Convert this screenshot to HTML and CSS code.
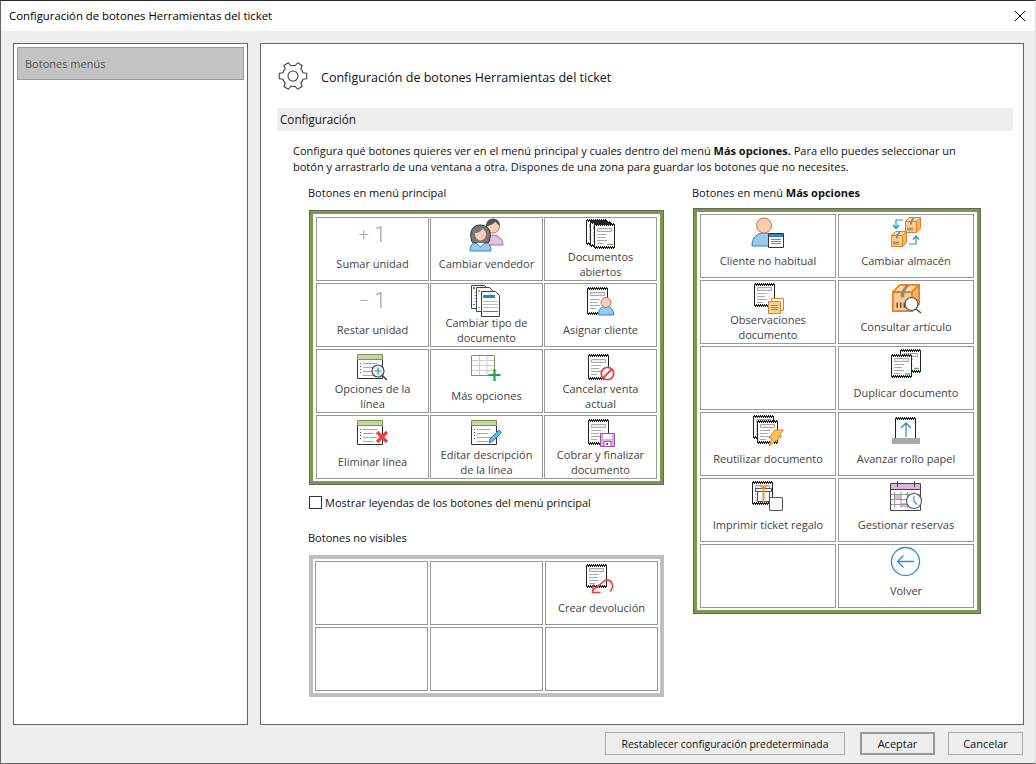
FILE: index.html
```html
<!DOCTYPE html>
<html lang="es">
<head>
<meta charset="utf-8">
<title>Configuración de botones Herramientas del ticket</title>
<link rel="stylesheet" href="styles.css">
</head>
<body>
<svg class="sprite" xmlns="http://www.w3.org/2000/svg">
  <symbol id="rc24" viewBox="0 0 21 24">
    <path shape-rendering="crispEdges" d="M.5 2l1-1 1 1 1-1 1 1 1-1 1 1 1-1 1 1 1-1 1 1 1-1 1 1 1-1 1 1 1-1 1 1 1-1 1 1 1-1 1 1V22l-1 1-1-1-1 1-1-1-1 1-1-1-1 1-1-1-1 1-1-1-1 1-1-1-1 1-1-1-1 1-1-1-1 1-1-1-1 1-1-1z" fill="#fff" stroke="#222"/>
    <path d="M3.500 4.500h14v3h-14z" fill="#eee" stroke="#aaa"/>
    <path d="M3 10.500h10M3 13.500h8M3 16.500h10M3 19.500h6" stroke="#aaa" fill="none"/>
  </symbol>
  <symbol id="rc26" viewBox="0 0 21 26">
    <path shape-rendering="crispEdges" d="M.5 2l1-1 1 1 1-1 1 1 1-1 1 1 1-1 1 1 1-1 1 1 1-1 1 1 1-1 1 1 1-1 1 1 1-1 1 1 1-1 1 1V24l-1 1-1-1-1 1-1-1-1 1-1-1-1 1-1-1-1 1-1-1-1 1-1-1-1 1-1-1-1 1-1-1-1 1-1-1-1 1-1-1z" fill="#fff" stroke="#222"/>
    <path d="M3.500 5.500h14v3h-14z" fill="#eee" stroke="#aaa"/>
    <path d="M3 11.500h10M3 14.500h8M3 17.500h10M3 20.500h6" stroke="#aaa" fill="none"/>
  </symbol>
  <symbol id="rc28" viewBox="0 0 21 28">
    <path shape-rendering="crispEdges" d="M.5 2l1-1 1 1 1-1 1 1 1-1 1 1 1-1 1 1 1-1 1 1 1-1 1 1 1-1 1 1 1-1 1 1 1-1 1 1 1-1 1 1V26l-1 1-1-1-1 1-1-1-1 1-1-1-1 1-1-1-1 1-1-1-1 1-1-1-1 1-1-1-1 1-1-1-1 1-1-1-1 1-1-1z" fill="#fff" stroke="#222"/>
    <path d="M3.500 5.500h14v3h-14z" fill="#eee" stroke="#aaa"/>
    <path d="M3 12.500h10M3 15.500h8M3 18.500h10M3 21.500h6" stroke="#aaa" fill="none"/>
  </symbol>
  <symbol id="tb" viewBox="0 0 26 25">
    <path d="M.5 5.500h25v19H.5z" fill="#fff" stroke="#333"/>
    <path d="M.5.500h25v5H.5z" fill="#c5d5a8" stroke="#7a9a4b"/>
    <path d="M3.500 9v11" stroke="#555" stroke-dasharray="1 2"/>
    <path d="M6 9.500h14M6 13.500h11M6 17.500h14M6 21.500h11" stroke="#aaa"/>
  </symbol>
  <symbol id="bx" viewBox="0 0 16 16">
    <path d="M.5 4.500h11v11H.5z" fill="#f8cb92" stroke="#e8801f"/>
    <path d="M.5 4.500l4-4h11l-4 4z" fill="#fbd9a8" stroke="#e8801f"/>
    <path d="M11.500 4.500l4-4v11l-4 4z" fill="#f4b66d" stroke="#e8801f"/>
    <path d="M5 4.500l3-4h2l-3 4v3H5z" fill="#888"/>
    <path d="M3 10.500v3M5 10.500v3M7 10.500v3" stroke="#444" stroke-width=".8"/>
  </symbol>
</svg>

<div class="window">
  <header class="titlebar">
    <span class="title">Configuración de botones Herramientas del ticket</span>
    <svg class="close" width="12" height="12" viewBox="0 0 12 12"><path d="M1 1l10 10M11 1L1 11" stroke="#111" fill="none"/></svg>
  </header>

  <main class="main">
    <nav class="side">
      <div class="side-item">Botones menús</div>
    </nav>

    <section class="content">
      <div class="heading">
        <svg class="gear" width="32" height="32" viewBox="0 0 32 32">
          <g transform="translate(16 16)" fill="none" stroke="#444" stroke-width="1.100" stroke-linejoin="round">
            <path d="M9.990-3.240L13.740-2.670V2.670L9.990 3.240A10.500 10.500 0 0 1 7.800 7.030L9.180 10.560 4.560 13.230 2.190 10.270A10.500 10.500 0 0 1-2.190 10.270L-4.560 13.230-9.180 10.560-7.800 7.030A10.500 10.500 0 0 1-9.990 3.240L-13.740 2.670V-2.670L-9.990-3.240A10.500 10.500 0 0 1-7.800-7.030L-9.180-10.560-4.560-13.230-2.190-10.270A10.500 10.500 0 0 1 2.190-10.270L4.560-13.230 9.180-10.560 7.800-7.030A10.500 10.500 0 0 1 9.990-3.240Z"/>
            <circle r="5"/>
          </g>
        </svg>
        <h1>Configuración de botones Herramientas del ticket</h1>
      </div>

      <h2 class="section">Configuración</h2>

      <p class="intro">Configura qué botones quieres ver en el menú principal y cuales dentro del menú <b>Más opciones.</b> Para ello puedes seleccionar un<br>botón y arrastrarlo de una ventana a otra. Dispones de una zona para guardar los botones que no necesites.</p>

      <div class="columns">
        <div class="col-left">
          <div class="label">Botones en menú principal</div>
          <div class="frame frame-main">
            <div class="grid grid-main">
              <div class="cell">
                <div class="glyph"><span class="gp">+</span><span>1</span></div>
                <div class="cap">Sumar unidad</div>
              </div>
              <div class="cell">
                <svg class="ic" viewBox="0 0 37 33">
                  <path d="M18 27c0-7 3-10 7-10s10 3 10 10z" fill="#e3bfe0" stroke="#a868a8"/>
                  <circle cx="25" cy="8.500" r="6.500" fill="#f8cdb2" stroke="#b67a55"/>
                  <path d="M18.500 8c0-5 3-7 6.500-7s6.500 2 6.500 6c-2-1-3-2-4-4-2 3-6 4-9 5z" fill="#555" stroke="#333" stroke-width=".6"/>
                  <path d="M2 33c0-7 4-10 10.500-10S23 26 23 33z" fill="#9cc8ec" stroke="#2e86c8"/>
                  <path d="M4 24C0 12 6 7 12.500 7S25 12 21 24c-3 2-14 2-17 0z" fill="#777" stroke="#333"/>
                  <ellipse cx="12.500" cy="16" rx="5.500" ry="6.500" fill="#f8cdb2"/>
                  <path d="M7 15c3 0 7-2 8-5 1 2 2 4 3 5l-2-6H9z" fill="#777"/>
                  <path d="M8 25l4.500 4 4.500-4" fill="#fff" stroke="#2e86c8"/>
                </svg>
                <div class="cap">Cambiar vendedor</div>
              </div>
              <div class="cell">
                <svg class="ic" viewBox="0 0 37 33">
                  <use href="#rc26" x="4" y="1" width="21" height="26"/>
                  <use href="#rc26" x="8" y="3" width="21" height="26"/>
                  <use href="#rc26" x="12" y="5" width="21" height="26"/>
                  <path d="M25 26.500h6" stroke="#7a9a4b"/>
                </svg>
                <div class="cap">Documentos<br>abiertos</div>
              </div>

              <div class="cell">
                <div class="glyph"><span class="gp">−</span><span>1</span></div>
                <div class="cap">Restar unidad</div>
              </div>
              <div class="cell">
                <svg class="ic" viewBox="0 0 37 33">
                  <path d="M3.500 1.500h13l3 3v20h-16z" fill="#fff" stroke="#444"/>
                  <path d="M5 3h2v2H5zM5 20h2v1H5z" fill="#1f9f4f"/>
                  <path d="M6 8.500h9M6 11.500h9M6 14.500h9M6 17.500h9" stroke="#bbb"/>
                  <path d="M8.500 3.500h13l3 3v21h-16z" fill="#fff" stroke="#444"/>
                  <path d="M10 6h2v2h-2zM10 23h2v1h-2z" fill="#eaa21f"/>
                  <path d="M13.500 7.500h14l4 4v21h-18z" fill="#fff" stroke="#444"/>
                  <path d="M15 11h12v3H15z" fill="#2e86c8"/>
                  <path d="M15 17.500h15M15 20.500h15M15 23.500h15" stroke="#bbb"/>
                  <path d="M15 27.500h15" stroke="#2e86c8"/>
                </svg>
                <div class="cap">Cambiar tipo de<br>documento</div>
              </div>
              <div class="cell">
                <svg class="ic" viewBox="0 0 37 33">
                  <use href="#rc28" x="5" y="3" width="21" height="28"/>
                  <path d="M16.500 31c0-6 3-9 7.500-9s7.500 3 7.500 9z" fill="#9cc8ec" stroke="#2e86c8"/>
                  <circle cx="24" cy="18.500" r="5" fill="#f8cdb2" stroke="#b67a55"/>
                </svg>
                <div class="cap">Asignar cliente</div>
              </div>

              <div class="cell">
                <svg class="ic" viewBox="0 0 37 33">
                  <use href="#tb" x="3" y="4" width="26" height="25"/>
                  <path d="M28 25l5 5" stroke="#444" stroke-width="1.500"/>
                  <circle cx="24" cy="21" r="6" fill="#eef3f7" stroke="#444" stroke-width="1.200"/>
                  <path d="M24 17.500v7M20.500 21h7" stroke="#2e8fd0" stroke-width="1.200"/>
                </svg>
                <div class="cap">Opciones de la<br>línea</div>
              </div>
              <div class="cell">
                <svg class="ic" viewBox="0 0 37 33">
                  <path d="M3.500 5.500h23v20h-23z" fill="#fff" stroke="#7a9a4b"/>
                  <path d="M4 10.500h22M4 15.500h22M4 20.500h22M11.500 6v19M19 6v19" stroke="#ccc"/>
                  <path d="M26.500 19v12M20.500 25h12" stroke="#1aa84b" stroke-width="2.200"/>
                </svg>
                <div class="cap">Más opciones</div>
              </div>
              <div class="cell">
                <svg class="ic" viewBox="0 0 37 33">
                  <use href="#rc26" x="6" y="4" width="21" height="26"/>
                  <circle cx="25.500" cy="23.500" r="6.200" fill="#fff" stroke="#f04040" stroke-width="1.800"/>
                  <path d="M21 28l9-9" stroke="#f04040" stroke-width="1.800"/>
                </svg>
                <div class="cap">Cancelar venta<br>actual</div>
              </div>

              <div class="cell">
                <svg class="ic" viewBox="0 0 37 33">
                  <use href="#tb" x="3" y="4" width="26" height="25"/>
                  <path d="M23 16l10 10M33 16L23 26" stroke="#f04040" stroke-width="3.200"/>
                </svg>
                <div class="cap">Eliminar línea</div>
              </div>
              <div class="cell">
                <svg class="ic" viewBox="0 0 37 33">
                  <use href="#tb" x="3" y="4" width="26" height="25"/>
                  <path d="M21 27l1-4 9-9 2.500 2.500-9 9z" fill="#6db3e8" stroke="#1f7fc4"/>
                </svg>
                <div class="cap">Editar descripción<br>de la línea</div>
              </div>
              <div class="cell">
                <svg class="ic" viewBox="0 0 37 33">
                  <use href="#rc26" x="6" y="3" width="21" height="26"/>
                  <path d="M18.500 17.500h14v13h-14z" fill="#d8b0d8" stroke="#a050a0"/>
                  <path d="M21 18h9v5h-9z" fill="#fff"/>
                  <path d="M22 25.500h7v5h-7z" fill="#fff" stroke="#a050a0"/>
                  <path d="M24 27h2v2h-2z" fill="#666"/>
                </svg>
                <div class="cap">Cobrar y finalizar<br>documento</div>
              </div>
            </div>
          </div>

          <label class="check"><input type="checkbox" class="box"><span>Mostrar leyendas de los botones del menú principal</span></label>

          <div class="label label-hidden">Botones no visibles</div>
          <div class="frame-hidden">
            <div class="grid grid-hidden">
              <div class="cell"></div>
              <div class="cell"></div>
              <div class="cell">
                <svg class="ic" viewBox="0 0 37 33">
                  <use href="#rc24" x="3" y="2" width="21" height="24"/>
                  <path d="M27 29.500c5-5 2-13-5-11L10 28" fill="none" stroke="#ee3b3b" stroke-width="1.500"/>
                  <path d="M10.500 22.500l-1 8h8" fill="none" stroke="#ee3b3b" stroke-width="1.500"/>
                </svg>
                <div class="cap">Crear devolución</div>
              </div>
              <div class="cell"></div>
              <div class="cell"></div>
              <div class="cell"></div>
            </div>
          </div>
        </div>

        <div class="col-right">
          <div class="label">Botones en menú <b>Más opciones</b></div>
          <div class="frame frame-more">
            <div class="grid grid-more">
              <div class="cell">
                <svg class="ic ic-even" viewBox="0 0 36 33">
                  <path d="M2 31c0-9 5-13 12-13s12 4 12 13z" fill="#9cc8ec" stroke="#2e86c8"/>
                  <circle cx="14" cy="10.500" r="7.500" fill="#f8cdb2" stroke="#b67a55"/>
                  <path d="M18.500 18.500h15v14h-15z" fill="#fff" stroke="#333"/>
                  <path d="M19 19h14v3H19z" fill="#2e86c8"/>
                  <path d="M21 24.500h10M21 26.500h10M21 28.500h10" stroke="#888"/>
                </svg>
                <div class="cap">Cliente no habitual</div>
              </div>
              <div class="cell">
                <svg class="ic ic-even" viewBox="0 0 36 33">
                  <use href="#bx" x="17" y="2" width="16" height="16"/>
                  <use href="#bx" x="3" y="16" width="16" height="16"/>
                  <path d="M15 5H8v8M5 10l3 3.500 3-3.500" fill="none" stroke="#2e8fd0" stroke-width="1.200"/>
                  <path d="M21 29h7v-8M25 24.500l3-3.500 3 3.500" fill="none" stroke="#2e8fd0" stroke-width="1.200"/>
                </svg>
                <div class="cap">Cambiar almacén</div>
              </div>

              <div class="cell">
                <svg class="ic ic-even" viewBox="0 0 36 33">
                  <use href="#rc24" x="4" y="2" width="21" height="24"/>
                  <path d="M21.500 17.500h12v12h-12z" fill="#fff" stroke="#e8801f"/>
                  <path d="M18.500 20.500h12v12h-12z" fill="#fbd58f" stroke="#e8801f"/>
                  <path d="M21 24.500h7M21 26.500h7M21 28.500h7" stroke="#a88040"/>
                </svg>
                <div class="cap">Observaciones<br>documento</div>
              </div>
              <div class="cell">
                <svg class="ic ic-even" viewBox="0 0 36 33">
                  <use href="#bx" x="4" y="3" width="28" height="28"/>
                  <path d="M28 28l5 4" stroke="#444" stroke-width="1.500"/>
                  <circle cx="23.500" cy="23" r="6.500" fill="#fff" stroke="#555" stroke-width="1.200"/>
                </svg>
                <div class="cap">Consultar artículo</div>
              </div>

              <div class="cell"></div>
              <div class="cell">
                <svg class="ic ic-even" viewBox="0 0 36 33">
                  <use href="#rc24" x="12" y="2" width="21" height="24"/>
                  <path d="M26 21.500h5" stroke="#5ab55a" stroke-width="1.500"/>
                  <use href="#rc24" x="3" y="7" width="21" height="24"/>
                  <path d="M17 27h5" stroke="#5ab55a" stroke-width="1.500"/>
                </svg>
                <div class="cap">Duplicar documento</div>
              </div>

              <div class="cell">
                <svg class="ic ic-even" viewBox="0 0 36 33">
                  <use href="#rc24" x="3" y="2" width="21" height="24"/>
                  <use href="#rc24" x="7" y="7" width="21" height="24"/>
                  <path d="M25 17h8.500l-5 6h3.500L19 33l3-8h-3z" fill="#fbc35a" stroke="#e8801f"/>
                </svg>
                <div class="cap">Reutilizar documento</div>
              </div>
              <div class="cell">
                <svg class="ic ic-even" viewBox="0 0 36 33">
                  <path shape-rendering="crispEdges" d="M7.500 6l1-1 1 1 1-1 1 1 1-1 1 1 1-1 1 1 1-1 1 1 1-1 1 1 1-1 1 1 1-1 1 1 1-1 1 1 1-1 1 1V26h-20z" fill="#fff" stroke="#222"/>
                  <path d="M4 25h28v6H4z" fill="#a8a8a8"/>
                  <path d="M18 24V10M13 15l5-5 5 5" fill="none" stroke="#2e8fd0" stroke-width="1.300"/>
                </svg>
                <div class="cap">Avanzar rollo papel</div>
              </div>

              <div class="cell">
                <svg class="ic ic-even" viewBox="0 0 36 33">
                  <use href="#rc24" x="2" y="2" width="21" height="24"/>
                  <path d="M6.500 10h14v12h-14z" fill="#fff"/>
                  <path d="M7.500 12.500h12v10h-12zM5.500 9.500h16v3h-16z" fill="#fff" stroke="#555"/>
                  <path d="M13.500 7v16" stroke="#f0952a" stroke-width="2"/>
                  <path d="M13.500 9.500L9.500 6M13.500 9.500l4-3.500" stroke="#f0952a" stroke-width="1.500" fill="none"/>
                  <path d="M19.500 18.500h13v13h-13z" fill="#fff" stroke="#555"/>
                </svg>
                <div class="cap">Imprimir ticket regalo</div>
              </div>
              <div class="cell">
                <svg class="ic ic-even" viewBox="0 0 36 33">
                  <path d="M2.500 4.500h30v27h-30z" fill="#fff" stroke="#444"/>
                  <path d="M3 5h29v5H3z" fill="#dcb8d8"/>
                  <path d="M9.500 2v6M26.500 2v6" stroke="#444"/>
                  <path d="M3 10.500h29" stroke="#444"/>
                  <path d="M6 16h7v4H6zM13 24h6v4h-6z" fill="#dcb8d8"/>
                  <path d="M6.500 13v16M13 13v16M19.500 13v16M26 13v16M3 15.500h29M3 20.500h29M3 25.500h29" stroke="#999"/>
                  <circle cx="26" cy="22" r="7.500" fill="#fff" stroke="#555" stroke-width="1.100"/>
                  <path d="M26 17v5.500l3 3" fill="none" stroke="#2e8fd0" stroke-width="1.100"/>
                </svg>
                <div class="cap">Gestionar reservas</div>
              </div>

              <div class="cell"></div>
              <div class="cell">
                <svg class="ic ic-even" viewBox="0 0 36 33">
                  <circle cx="17.500" cy="16.500" r="14" fill="#fff" stroke="#2e8fd0" stroke-width="1.300"/>
                  <path d="M26 16.500H9.500M15.500 10.500l-6 6 6 6" fill="none" stroke="#2e8fd0" stroke-width="1.300"/>
                </svg>
                <div class="cap">Volver</div>
              </div>
            </div>
          </div>
        </div>
      </div>
    </section>
  </main>

  <footer class="footer">
    <button class="btn btn-reset" type="button">Restablecer configuración predeterminada</button>
    <button class="btn btn-default" type="button">Aceptar</button>
    <button class="btn" type="button">Cancelar</button>
  </footer>
</div>
</body>
</html>
```

FILE: styles.css
```css
* { box-sizing: border-box; }

html, body {
  margin: 0;
  padding: 0;
  overflow: hidden;
  background: #222;
}

body {
  font-family: "Open Sans", "Noto Sans", sans-serif;
  font-size: 11px;
  color: #111;
}

.sprite { display: none; }

.window {
  width: 1036px;
  height: 764px;
  display: flex;
  flex-direction: column;
  background: #eeeeee;
  border-top: 1px solid #2a2a2a;
  border-left: 1px solid #666;
  border-right: 1px solid #ddd;
  border-bottom: 1px solid #666;
}

.titlebar {
  flex: none;
  height: 30px;
  background: #fff;
  display: flex;
  align-items: center;
  justify-content: space-between;
  padding: 0 9px 1px 8px;
  color: #000;
}

.title { font-size: 11.37px; }

.close { flex: none; }

.main {
  flex: none;
  height: 694px;
  display: flex;
  gap: 12px;
  padding: 12px 0 0 12px;
}

.side {
  width: 235px;
  height: 682px;
  background: #fff;
  border: 1px solid #666;
  padding: 3px;
}

.side-item {
  height: 33px;
  background: #c3c3c3;
  border: 1px solid #999;
  display: flex;
  align-items: center;
  padding-left: 7px;
  color: #555;
}

.content {
  width: 764px;
  height: 682px;
  background: #fff;
  border: 1px solid #666;
}

.heading {
  display: flex;
  align-items: center;
  height: 32px;
  margin: 16px 0 0 16px;
}

.gear { flex: none; }

.heading h1 {
  margin: 2px 0 0 10px;
  padding-left: 2px;
  font-size: 12.54px;
  font-weight: 400;
  color: #111;
}

.section {
  margin: 16px 10px 0 16px;
  height: 23px;
  background: #eeeeee;
  font-size: 11.7px;
  font-weight: 400;
  line-height: 23px;
  padding-left: 3px;
  color: #111;
}

.intro {
  margin: 12px 0 0 32px;
  line-height: 16px;
  white-space: nowrap;
}

.columns {
  display: flex;
  margin: 10px 0 0 47px;
}

.col-left { width: 384px; }
.col-right { flex: 1; }

.label { height: 16px; line-height: 16px; white-space: nowrap; }

.frame {
  border: 3px solid #7a9a4b;
  box-shadow: 0 0 0 1px #666;
  background: #fff;
  width: max-content;
}

.frame-main {
  margin: 10px 0 0 2px;
  padding: 3px 3px 2px;
}

.frame-more {
  margin: 8px 0 0 2px;
  padding: 2px 3px;
}

.frame-hidden {
  margin: 9px 0 0 1px;
  border: 4px solid #bfbfbf;
  padding: 2px;
  width: max-content;
}

.grid { display: grid; grid-auto-rows: 64px; }

.grid-main {
  grid-template-columns: repeat(3, 113px);
  gap: 2px 1px;
}

.grid-hidden {
  grid-template-columns: repeat(3, 113px);
  gap: 2px;
}

.grid-more {
  grid-template-columns: repeat(2, 136px);
  gap: 2px;
}

.cell {
  border: 1px solid #999;
  background: #fff;
  display: flex;
  flex-direction: column;
  align-items: center;
  color: #444;
}

.ic {
  flex: none;
  display: block;
  width: 37px;
  height: 33px;
  overflow: visible;
}

.ic-even { width: 36px; }

.glyph {
  flex: none;
  height: 33px;
  display: flex;
  align-items: center;
  gap: 5px;
  font-family: "Roboto", sans-serif;
  font-weight: 300;
  font-size: 22px;
  color: #aaa;
  line-height: 1;
  padding-top: 1px;
}

.gp { font-size: 18px; }

.cap {
  flex: none;
  height: 25px;
  display: flex;
  align-items: center;
  text-align: center;
  line-height: 15px;
  white-space: nowrap;
}

.check {
  display: flex;
  align-items: center;
  gap: 3px;
  height: 13px;
  margin: 12px 0 0 1px;
  white-space: nowrap;
}

.box {
  appearance: none;
  -webkit-appearance: none;
  width: 13px;
  height: 13px;
  margin: 0;
  background: #fff;
  border: 1px solid #333;
}

.label-hidden { margin-top: 21px; }

.footer {
  flex: none;
  display: flex;
  justify-content: flex-end;
  gap: 13px;
  padding: 7px 12px 0 0;
}

.btn {
  height: 23px;
  width: 75px;
  padding: 0;
  font: inherit;
  color: #111;
  background: #eeeeee;
  border: 1px solid #aaa;
}

.btn-reset { width: 240px; margin-right: 2px; font-size: 10.4px; }
.btn-default { border: 2px solid #999; }
```
